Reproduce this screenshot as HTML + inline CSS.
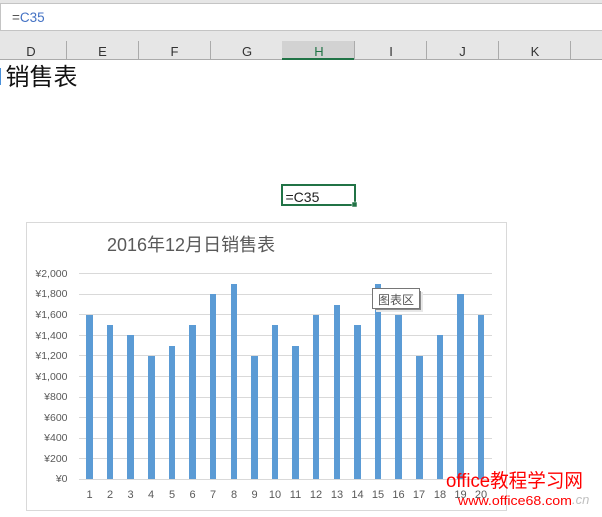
<!DOCTYPE html>
<html><head><meta charset="utf-8">
<style>
html,body{margin:0;padding:0;background:#fff}
body{width:602px;height:517px;overflow:hidden;position:relative}
svg{position:absolute;left:0;top:0}
text{font-family:"Liberation Sans","Noto Sans CJK SC",sans-serif}
</style></head><body>
<svg width="602" height="517" viewBox="0 0 602 517" xmlns="http://www.w3.org/2000/svg">
<!-- formula bar -->
<rect x="0" y="0" width="602" height="59" fill="#e6e6e6"/>
<rect x="0.5" y="3.5" width="602" height="27" fill="#fff" stroke="#c4c4c4"/>
<text x="12" y="22" font-size="13.500" fill="#555">=<tspan fill="#4472c4">C35</tspan></text>
<!-- headers -->
<rect x="282" y="41" width="72" height="18" fill="#d2d2d2"/>
<rect x="0" y="59" width="602" height="1" fill="#ababab"/>
<rect x="282" y="58" width="72" height="2" fill="#217346"/>
<g fill="#ababab">
<rect x="66" y="41" width="1" height="18"/><rect x="138" y="41" width="1" height="18"/><rect x="210" y="41" width="1" height="18"/><rect x="354" y="41" width="1" height="18"/><rect x="426" y="41" width="1" height="18"/><rect x="498" y="41" width="1" height="18"/><rect x="570" y="41" width="1" height="18"/>
</g>
<g font-size="13" fill="#333" text-anchor="middle">
<text x="31" y="56">D</text><text x="102.500" y="56">E</text><text x="174.500" y="56">F</text><text x="247" y="56">G</text><text x="319" y="56" fill="#217346">H</text><text x="391" y="56">I</text><text x="462.500" y="56">J</text><text x="535" y="56">K</text>
</g>
<!-- sheet title -->
<rect x="0" y="68" width="1" height="17" fill="#4a90d9"/>
<text x="5.500" y="85" font-size="24" fill="#111">销售表</text>
<!-- selected cell -->
<rect x="282" y="185" width="73" height="20" fill="#fff" stroke="#217346" stroke-width="2"/>
<rect x="352" y="202" width="5" height="5" fill="#217346" stroke="#fff" stroke-width="0.5"/>
<text x="285.500" y="202" font-size="14" fill="#222">=C35</text>
<!-- chart -->
<rect x="26.500" y="222.500" width="480" height="288" fill="#fff" stroke="#d9d9d9"/>
<text x="107" y="251" font-size="18" fill="#595959">2016年12月日销售表</text>
<g fill="#d9d9d9">
<rect x="79" y="273" width="413" height="1"/><rect x="79" y="294" width="413" height="1"/><rect x="79" y="314" width="413" height="1"/><rect x="79" y="335" width="413" height="1"/><rect x="79" y="355" width="413" height="1"/><rect x="79" y="376" width="413" height="1"/><rect x="79" y="397" width="413" height="1"/><rect x="79" y="417" width="413" height="1"/><rect x="79" y="438" width="413" height="1"/><rect x="79" y="458" width="413" height="1"/><rect x="79" y="479" width="413" height="1"/>
</g>
<g font-size="10.500" fill="#595959" text-anchor="end">
<text x="67.500" y="277">¥2,000</text><text x="67.500" y="297">¥1,800</text><text x="67.500" y="318">¥1,600</text><text x="67.500" y="339">¥1,400</text><text x="67.500" y="359">¥1,200</text><text x="67.500" y="380">¥1,000</text><text x="67.500" y="400">¥800</text><text x="67.500" y="421">¥600</text><text x="67.500" y="441">¥400</text><text x="67.500" y="462">¥200</text><text x="67.500" y="482">¥0</text>
</g>
<g fill="#5b9bd5">
<rect x="86" y="315" width="7" height="164"/>
<rect x="107" y="325" width="6" height="154"/>
<rect x="127" y="335" width="7" height="144"/>
<rect x="148" y="356" width="7" height="123"/>
<rect x="169" y="346" width="6" height="133"/>
<rect x="189" y="325" width="7" height="154"/>
<rect x="210" y="294" width="6" height="185"/>
<rect x="231" y="284" width="6" height="195"/>
<rect x="251" y="356" width="7" height="123"/>
<rect x="272" y="325" width="6" height="154"/>
<rect x="292" y="346" width="7" height="133"/>
<rect x="313" y="315" width="6" height="164"/>
<rect x="334" y="305" width="6" height="174"/>
<rect x="354" y="325" width="7" height="154"/>
<rect x="375" y="284" width="6" height="195"/>
<rect x="395" y="315" width="7" height="164"/>
<rect x="416" y="356" width="7" height="123"/>
<rect x="437" y="335" width="6" height="144"/>
<rect x="457" y="294" width="7" height="185"/>
<rect x="478" y="315" width="6" height="164"/>
</g>
<g font-size="11" fill="#595959" text-anchor="middle">
<text x="89.500" y="498">1</text><text x="110" y="498">2</text><text x="130.500" y="498">3</text><text x="151" y="498">4</text><text x="172" y="498">5</text><text x="192.500" y="498">6</text><text x="213" y="498">7</text><text x="234" y="498">8</text><text x="254.500" y="498">9</text><text x="275" y="498">10</text><text x="295.500" y="498">11</text><text x="316" y="498">12</text><text x="337" y="498">13</text><text x="357.500" y="498">14</text><text x="378" y="498">15</text><text x="398.500" y="498">16</text><text x="419" y="498">17</text><text x="440" y="498">18</text><text x="460.500" y="498">19</text><text x="481" y="498">20</text>
</g>
<!-- tooltip -->
<rect x="376" y="292" width="47" height="20" fill="#e8e8e8"/>
<rect x="375" y="291" width="46" height="19" fill="#8a8a8a"/>
<rect x="372.500" y="288.500" width="47" height="20" fill="#fff" stroke="#767676"/>
<text x="378" y="304" font-size="12" fill="#555">图表区</text>
<!-- watermark -->
<text x="572" y="504" font-size="13" font-style="italic" fill="#c0c0c0">.cn</text>
<text x="446" y="487" font-size="19" textLength="137" lengthAdjust="spacingAndGlyphs" fill="#ff0000">office教程学习网</text>
<text x="458" y="505" font-size="13" textLength="114" lengthAdjust="spacingAndGlyphs" fill="#ff0000">www.office68.com</text>
</svg>
</body></html>
